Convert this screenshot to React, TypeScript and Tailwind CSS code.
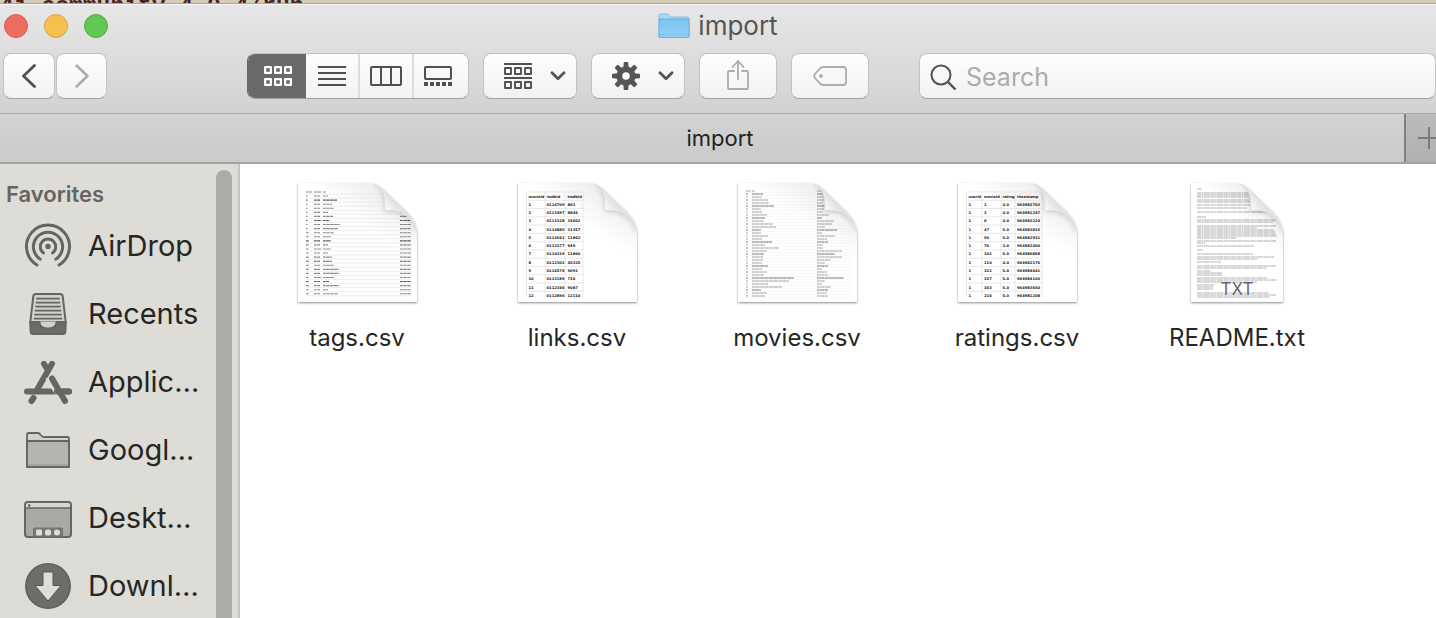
import type { ReactNode } from "react";

const LINKS_ROWS = [
  ["movieId", "imdbId", "tmdbId"],
  ["1", "0114709", "862"],
  ["2", "0113497", "8844"],
  ["3", "0113228", "15602"],
  ["4", "0114885", "31357"],
  ["5", "0113041", "11862"],
  ["6", "0113277", "949"],
  ["7", "0114319", "11860"],
  ["8", "0112302", "45325"],
  ["9", "0114576", "9091"],
  ["10", "0113189", "710"],
  ["11", "0112346", "9087"],
  ["12", "0112896", "12110"],
];

const RATINGS_ROWS = [
  ["userId", "movieId", "rating", "timestamp"],
  ["1", "1", "4.0", "964982703"],
  ["1", "3", "4.0", "964981247"],
  ["1", "6", "4.0", "964982224"],
  ["1", "47", "5.0", "964983815"],
  ["1", "50", "5.0", "964982931"],
  ["1", "70", "3.0", "964982400"],
  ["1", "101", "5.0", "964980868"],
  ["1", "110", "4.0", "964982176"],
  ["1", "151", "5.0", "964984041"],
  ["1", "157", "5.0", "964984100"],
  ["1", "163", "5.0", "964983650"],
  ["1", "216", "5.0", "964981208"],
];

const TAG_WIDTHS = [3, 5, 14, 9, 11, 5, 10, 6, 17, 15, 11, 8, 8, 5, 8, 5, 9, 9, 11, 16, 16, 11, 6, 16, 5, 15];
const MOVIE_WIDTHS = [3, 11, 10, 16, 17, 22, 9, 10, 15, 13, 12, 21, 24, 9, 9, 16, 10, 20, 13, 27, 15, 12, 11, 11, 10, 16, 10, 15, 12, 42, 37, 16, 30, 9, 15, 13];
const GENRE_WIDTHS = [5, 8, 10, 12, 6, 10, 7, 6, 12, 5, 17, 15, 8, 20, 5, 18, 10, 11, 6, 6, 25, 18, 25, 14, 8, 11, 5, 10, 11, 27, 8, 5, 14, 11, 10, 11];

/* Each entry is [y, width] of one line of body text. */
const README_LINES: [number, number][] = [
  [6, 5], [10, 80], [12, 76], [14, 74], [17, 78], [19, 60], [22, 77], [25, 50], [29, 77], [34, 9],
  [37, 79], [39, 76], [43, 79], [45, 60], [47, 77], [49, 78], [51, 79], [53, 80], [55, 40],
  [58, 79], [60, 8], [63, 57], [67, 6], [71, 56], [74, 77], [76, 61], [79, 24],
  [83, 79], [85, 69], [88, 14], [90, 25], [92, 25], [95, 70], [97, 79], [99, 60],
  [102, 17], [104, 16], [106, 16], [110, 72], [112, 79], [114, 73],
];

function Page({ id, width = 119, children }: { id: string; width?: number; children: ReactNode }) {
  const w = width;
  const outline = `M0 0H${w - 51}C${w - 43} 0 ${w - 38} 2 ${w - 34} 6L${w - 11} 28C${w - 4} 35 ${w} 42 ${w} 52V119H0Z`;
  const curl = `M${w - 44} 0.5C${w - 40} 1 ${w - 37} 3 ${w - 34} 6L${w - 11} 28C${w - 5} 34 ${w} 41 ${w} 50C${w - 6} 33 ${w - 16} 26 ${w - 32} 27.5C${w - 32} 14 ${w - 34} 4 ${w - 44} 0.5Z`;
  return (
    <svg width={w + 8} height="128" viewBox={`-4 -4 ${w + 8} 128`} aria-hidden="true">
      <defs>
        <linearGradient id={`${id}-sheet`} x1="0.2" y1="0.9" x2="0.85" y2="0">
          <stop offset="0" stopColor="#fff" />
          <stop offset="0.6" stopColor="#fff" />
          <stop offset="0.85" stopColor="#f0f0f0" />
          <stop offset="1" stopColor="#dedede" />
        </linearGradient>
        <linearGradient id={`${id}-curl`} x1="0.2" y1="0.7" x2="0.5" y2="0.4">
          <stop offset="0" stopColor="#fff" />
          <stop offset="0.4" stopColor="#fdfdfd" />
          <stop offset="1" stopColor="#e2e2e2" />
        </linearGradient>
        <filter id={`${id}-shadow`} x="-10%" y="-10%" width="120%" height="120%">
          <feDropShadow dx="0" dy="1" stdDeviation="1.2" floodColor="#000" floodOpacity="0.45" />
        </filter>
        <filter id={`${id}-soft`} x="-30%" y="-30%" width="160%" height="160%">
          <feDropShadow dx="-0.3" dy="1.5" stdDeviation="2" floodColor="#000" floodOpacity="0.18" />
        </filter>
        <clipPath id={`${id}-clip`}>
          <path d={outline} />
        </clipPath>
      </defs>
      <path d={outline} fill="#fff" filter={`url(#${id}-shadow)`} />
      <path d={outline} fill={`url(#${id}-sheet)`} />
      <g clipPath={`url(#${id}-clip)`}>
        {children}
        <path d={curl} fill={`url(#${id}-curl)`} filter={`url(#${id}-soft)`} />
        <path d={curl} fill="none" stroke="#d2d2d2" strokeWidth="0.5" />
      </g>
    </svg>
  );
}

function GridThumb({ id, rows, columns, edges }: { id: string; rows: string[][]; columns: number[]; edges: number[] }) {
  const left = edges[0];
  const right = edges[edges.length - 1];
  return (
    <Page id={id}>
      <g stroke="#e2e2e2" strokeWidth="0.8">
        {rows.map((_, i) => (
          <path key={i} d={`M${left} ${9 + i * 8.27}H${right}`} />
        ))}
        {edges.map((x) => (
          <path key={x} d={`M${x} 9V114`} />
        ))}
      </g>
      <g className="font-['DejaVu_Sans']" fontSize="3.7" fontWeight="700" fill="#222">
        {rows.map((row, i) =>
          row.map((cell, j) => (
            <text key={j} x={columns[j]} y={14.6 + i * 8.27} fontSize={i === 0 ? 3.5 : 3.7}>
              {cell}
            </text>
          )),
        )}
      </g>
    </Page>
  );
}

function TagsThumb() {
  return (
    <Page id="tags">
      {TAG_WIDTHS.map((w, i) => {
        const y = 9 + i * 4.07;
        return (
          <g key={i}>
            <path d={`M8 ${y + 2}H114`} stroke="#e2e2e2" strokeWidth="0.6" />
            <g stroke="#444" strokeWidth="1.1" strokeDasharray="2.3 0.3 1.1 0.2" opacity={i % 5 === 2 ? 0.9 : 0.65}>
              <path d={`M8 ${y}h${i === 0 ? 6 : i > 9 ? 3 : 1.5}`} />
              <path d={`M16 ${y}h${i % 7 === 0 ? 7.5 : 6}`} />
              <path d={`M25 ${y}h${w}`} />
              {i > 2 && <path d={`M102 ${y}h11`} />}
            </g>
          </g>
        );
      })}
    </Page>
  );
}

function MoviesThumb() {
  return (
    <Page id="movies">
      {MOVIE_WIDTHS.map((w, i) => {
        const y = 8 + i * 3;
        return (
          <g key={i}>
            <path d={`M8 ${y + 1.6}H114`} stroke="#eaeaea" strokeWidth="0.4" />
            <g stroke="#333" strokeWidth="0.8" strokeDasharray="2.7 0.3 1.3 0.2" opacity={i % 4 === 1 ? 0.9 : 0.6}>
              <path d={`M8 ${y}h${i === 0 ? 5 : 1.8}`} />
              <path d={`M14 ${y}h${w}`} />
              <path d={`M79 ${y}h${GENRE_WIDTHS[i]}`} />
            </g>
          </g>
        );
      })}
    </Page>
  );
}

function ReadmeThumb() {
  return (
    <Page id="readme" width={92}>
      <g stroke="#555" strokeWidth="0.7" strokeDasharray="4.1 0.4 1.7 0.4 6.3 0.5" opacity="0.65">
        {README_LINES.map(([y, w]) => (
          <path key={y} d={`M6 ${y}h${w}`} />
        ))}
      </g>
      <text x="46" y="112" textAnchor="middle" fontSize="17" fill="#666" stroke="#fff" strokeWidth="0.6" paintOrder="stroke" className="font-['Inter']">
        TXT
      </text>
    </Page>
  );
}

const FILES: { name: string; thumb: ReactNode }[] = [
  { name: "tags.csv", thumb: <TagsThumb /> },
  { name: "links.csv", thumb: <GridThumb id="links" rows={LINKS_ROWS} columns={[10.5, 28.5, 49.5]} edges={[8.5, 27, 47, 65]} /> },
  { name: "movies.csv", thumb: <MoviesThumb /> },
  { name: "ratings.csv", thumb: <GridThumb id="ratings" rows={RATINGS_ROWS} columns={[10.5, 26, 44.5, 59]} edges={[8.5, 24, 43, 57, 84]} /> },
  { name: "README.txt", thumb: <ReadmeThumb /> },
];

function AirDropIcon() {
  return (
    <svg width="48" height="48" viewBox="0 0 48 48" fill="none" stroke="#666560" strokeWidth="3" strokeLinecap="round" aria-hidden="true">
      <circle cx="24" cy="24.5" r="2.7" fill="#666560" stroke="none" />
      <path d="M19.6 31a7.7 7.7 0 1 1 8.8 0" />
      <path d="M16.3 37.2a14.6 14.6 0 1 1 15.4 0" />
      <path d="M13 43a21.5 21.5 0 1 1 22 0" />
    </svg>
  );
}

function RecentsIcon() {
  return (
    <svg width="48" height="48" viewBox="0 0 48 48" fill="none" stroke="#666560" strokeWidth="2" strokeLinejoin="round" aria-hidden="true">
      <path d="M6.300 32L9.300 6.200Q9.600 4 11.800 4H36.200Q38.400 4 38.700 6.200L41.700 32Z" fill="#d2d1cc" />
      <path d="M12.300 8.700h23.400M11.800 12.700h24.400M11.300 16.700h25.400M10.800 20.700h26.400M10.300 24.700h27.400M9.800 28.700h28.400" strokeWidth="1.700" />
      <path d="M16 31.500h16c0 8-16 8-16 0Z" fill="#d2d1cc" stroke="none" />
      <path d="M6.200 32.500H15.500c0 8 17 8 17 0H41.800L41.300 42q-0.200 2-2.200 2H8.900q-2 0-2.200-2Z" fill="#6c6b65" />
    </svg>
  );
}

function ApplicationsIcon() {
  return (
    <svg width="48" height="48" viewBox="0 0 48 48" fill="none" stroke="#666560" strokeWidth="6" strokeLinecap="round" aria-hidden="true">
      <path d="M28 5.800L13.500 31M20 5.800L24 12.500" />
      <path d="M3 33.500h42" />
      <path d="M7.500 43L9.500 40" />
      <path d="M25.200 18.500L40.500 43" stroke="#dddcd7" strokeWidth="9" strokeLinecap="butt" />
      <path d="M33 33.500H45" />
      <path d="M28 20.500L41 43" />
    </svg>
  );
}

function FolderIcon() {
  return (
    <svg width="48" height="48" viewBox="0 0 48 48" stroke="#666560" strokeWidth="1.800" strokeLinejoin="round" aria-hidden="true">
      <path d="M3 41V8.500q0-1.500 1.500-1.500H14c2.500 0 3 4 5.500 4H43.500q1.500 0 1.500 1.500V41Z" fill="#d2d1cc" />
      <path d="M3 17.500q0-2.500 2-2.500H43q2 0 2 2.500V41H3Z" fill="#b5b4af" />
      <path d="M4 39h40" stroke="#98978f" strokeWidth="1" />
    </svg>
  );
}

function DesktopIcon() {
  return (
    <svg width="48" height="48" viewBox="0 0 48 48" aria-hidden="true">
      <rect x="1" y="8" width="46" height="35" rx="3" fill="#a9a8a3" stroke="#666560" strokeWidth="2" />
      <path d="M2 14V11q0-2 2-2H44q2 0 2 2v3Z" fill="#d8d7d2" />
      <path d="M2 14h44" stroke="#666560" strokeWidth="1.500" />
      <circle cx="5.200" cy="11.500" r="1.200" fill="#55544f" />
      <path d="M9 42.500V35q0-1.500 1.500-1.500H37.500q1.500 0 1.500 1.500v7.500Z" fill="#77766f" />
      <rect x="12" y="35.500" width="6" height="6" rx="1" fill="#deddd9" />
      <rect x="21" y="35.500" width="6" height="6" rx="2" fill="#deddd9" />
      <circle cx="33" cy="38.500" r="3" fill="#deddd9" />
    </svg>
  );
}

function DownloadsIcon() {
  return (
    <svg width="48" height="48" viewBox="0 0 48 48" aria-hidden="true">
      <circle cx="24" cy="24" r="22.200" fill="#6e6d67" stroke="#5f5e58" strokeWidth="1.500" />
      <path d="M19 10h10v13.500h8L24 39 11 23.500h8Z" fill="#deddd8" stroke="#595852" strokeWidth="1" strokeLinejoin="round" />
    </svg>
  );
}

const FAVORITES: { label: string; icon: ReactNode }[] = [
  { label: "AirDrop", icon: <AirDropIcon /> },
  { label: "Recents", icon: <RecentsIcon /> },
  { label: "Applic…", icon: <ApplicationsIcon /> },
  { label: "Googl…", icon: <FolderIcon /> },
  { label: "Deskt…", icon: <DesktopIcon /> },
  { label: "Downl…", icon: <DownloadsIcon /> },
];

function Chevron() {
  return (
    <svg width="16" height="10" viewBox="0 0 16 10" fill="none" stroke="#555" strokeWidth="2.800" strokeLinecap="round" strokeLinejoin="round" aria-hidden="true">
      <path d="M2 1.800l6 6 6-6" />
    </svg>
  );
}

function GearIcon() {
  return (
    <svg width="28" height="28" viewBox="-14 -14 28 28" aria-hidden="true">
      <g fill="#555">
        {[0, 45, 90, 135, 180, 225, 270, 315].map((angle) => (
          <path key={angle} d="M-2.700 -8L-2.300 -13.300Q-2.200 -14 -1.500 -14H1.500Q2.200 -14 2.300 -13.300L2.700 -8Z" transform={`rotate(${angle})`} />
        ))}
      </g>
      <circle r="6.700" fill="none" stroke="#555" strokeWidth="5.800" />
    </svg>
  );
}

const BUTTON =
  "flex h-[46px] shrink-0 items-center justify-center rounded-[8px] border border-[#c3c3c3] border-b-[#a2a2a2] bg-linear-to-b from-[#fdfdfd] to-[#f2f2f2]";
const SEGMENT = "flex items-center justify-center";

export default function App() {
  return (
    <div className="flex h-screen flex-col overflow-hidden bg-white font-['Inter','Liberation_Sans',sans-serif] text-[#222]">
      <div className="h-[3px] shrink-0 overflow-hidden bg-[#d2ccb8]">
        <div className="-mt-[5px] font-['Liberation_Mono',monospace] text-[23px] leading-6 font-bold whitespace-nowrap text-[#4a2424]">
          4j-community-4.0.4/run
        </div>
      </div>

      <header className="shrink-0 border-t border-b border-t-[#aaa695] border-b-[#a9a9a9] bg-linear-to-b from-[#e7e7e7] to-[#d2d2d2] pb-[14px] shadow-[inset_0_1px_0_#f8f8f8]">
        <div className="mb-[5px] grid h-11 grid-cols-[1fr_auto_1fr] items-center pl-1">
          <div className="flex gap-4">
            <button aria-label="Close" className="size-6 rounded-full border border-[#db5a50] bg-[#ee6b60]" />
            <button aria-label="Minimize" className="size-6 rounded-full border border-[#dca243] bg-[#f5c04f]" />
            <button aria-label="Zoom" className="size-6 rounded-full border border-[#52ab41] bg-[#62c755]" />
          </div>
          <h1 className="flex items-center gap-2 pr-1 text-[26px] leading-8 text-[#555]">
            <svg width="32" height="26" viewBox="0 0 32 26" aria-hidden="true">
              <defs>
                <linearGradient id="folder-front" x1="0" y1="0" x2="0" y2="1">
                  <stop offset="0" stopColor="#7cc4f0" />
                  <stop offset="1" stopColor="#8fd0f7" />
                </linearGradient>
              </defs>
              <path d="M1 24V2.500Q1 1 2.500 1H9c2 0 2.500 3 4.500 3H29.500Q31 4 31 5.500V24Z" fill="#a3d8f6" stroke="#78b3d6" strokeWidth="0.800" />
              <path d="M1 6h30v17.500q0 1-1 1H2q-1 0-1-1Z" fill="url(#folder-front)" stroke="#66a9d0" strokeWidth="0.800" />
              <path d="M1.500 22h29" stroke="#6db1d9" strokeWidth="0.600" />
            </svg>
            import
          </h1>
          <div />
        </div>

        <div className="flex items-center pl-[3px]">
          <div className="flex gap-px">
            <button aria-label="Back" className={`${BUTTON} w-[52px]`}>
              <svg width="16" height="26" viewBox="0 0 16 26" fill="none" stroke="#505050" strokeWidth="2.800" strokeLinecap="round" strokeLinejoin="round" aria-hidden="true">
                <path d="M13.500 2.500L2.500 13l11 10.500" />
              </svg>
            </button>
            <button aria-label="Forward" className={`${BUTTON} w-[51px]`}>
              <svg width="16" height="26" viewBox="0 0 16 26" fill="none" stroke="#acacac" strokeWidth="2.500" strokeLinecap="round" strokeLinejoin="round" aria-hidden="true">
                <path d="M2.500 2.500l11 10.500-11 10.500" />
              </svg>
            </button>
          </div>

          <div role="group" aria-label="View" className="ml-[140px] flex h-[46px] shrink-0 overflow-hidden rounded-[8px] border border-[#c3c3c3] border-b-[#a2a2a2] border-l-[#666] bg-linear-to-b from-[#fdfdfd] to-[#f2f2f2]">
            <button aria-label="Icons" aria-pressed="true" className={`${SEGMENT} w-[58px] bg-[#6a6a6a] pl-[2px]`}>
              <svg width="28" height="20" viewBox="0 0 28 20" fill="none" stroke="#fff" strokeWidth="2.200" strokeLinejoin="round" aria-hidden="true">
                <path d="M1.100 1.100h5.800v5.800H1.100ZM11.100 1.100h5.800v5.800h-5.800ZM21.100 1.100h5.800v5.800h-5.800ZM1.100 13.100h5.800v5.800H1.100ZM11.100 13.100h5.800v5.800h-5.800ZM21.100 13.100h5.800v5.800h-5.800Z" />
              </svg>
            </button>
            <button aria-label="List" className={`${SEGMENT} w-[52px]`}>
              <svg width="28" height="20" viewBox="0 0 28 20" fill="none" stroke="#505050" strokeWidth="2" aria-hidden="true">
                <path d="M0 1h28M0 7h28M0 13h28M0 19h28" />
              </svg>
            </button>
            <button aria-label="Columns" className={`${SEGMENT} w-[54px] border-l-2 border-[#dcdcdc]`}>
              <svg width="32" height="20" viewBox="0 0 32 20" fill="none" stroke="#505050" strokeWidth="2" aria-hidden="true">
                <rect x="1" y="1" width="30" height="18" rx="1" />
                <path d="M11 1v18M21 1v18" />
              </svg>
            </button>
            <button aria-label="Gallery" className={`${SEGMENT} w-[56px] border-l-2 border-[#dcdcdc] pr-[6px]`}>
              <svg width="28" height="20" viewBox="0 0 28 20" fill="none" stroke="#505050" strokeWidth="2" aria-hidden="true">
                <rect x="1" y="1" width="26" height="12" rx="1" />
                <path d="M0 18h4M6 18h4M12 18h4M18 18h4M24 18h4" strokeWidth="4" />
              </svg>
            </button>
          </div>

          <div className="ml-[14px] flex gap-[14px]">
            <button aria-label="Group" className={`${BUTTON} w-[94px] gap-[18px] pl-[10px]`}>
              <svg width="28" height="26" viewBox="0 0 28 26" fill="none" stroke="#505050" strokeWidth="1.900" strokeLinejoin="round" aria-hidden="true">
                <path d="M0 1h28M0 15h28" />
                <path d="M1 5h6v6H1ZM11 5h6v6h-6ZM21 5h6v6h-6ZM1 19h6v6H1ZM11 19h6v6h-6ZM21 19h6v6h-6Z" />
              </svg>
              <Chevron />
            </button>
            <button aria-label="Action" className={`${BUTTON} w-[94px] gap-[18px] pl-[10px]`}>
              <GearIcon />
              <Chevron />
            </button>
            <button aria-label="Share" className={`${BUTTON} w-[78px]`}>
              <svg width="24" height="32" viewBox="0 0 24 32" fill="none" stroke="#acacac" strokeWidth="1.800" strokeLinecap="round" strokeLinejoin="round" className="mb-[2px]" aria-hidden="true">
                <path d="M8 12H3q-1 0-1 1V29q0 1 1 1H21q1 0 1-1V13q0-1-1-1H16" />
                <path d="M12 20V2M6.500 8L12 2l5.500 6" />
              </svg>
            </button>
            <button aria-label="Tags" className={`${BUTTON} w-[78px]`}>
              <svg width="34" height="20" viewBox="0 0 34 20" fill="none" stroke="#acacac" strokeWidth="1.800" strokeLinejoin="round" aria-hidden="true">
                <path d="M10.500 1H30q3 0 3 3V16q0 3-3 3H10.500Q8.500 19 7 17.500L2 12Q0.500 10 2 8L7 2.500Q8.500 1 10.500 1Z" />
                <circle cx="8" cy="10" r="1.900" fill="#acacac" stroke="none" />
              </svg>
            </button>
          </div>

          <label className="ml-[50px] flex h-[46px] min-w-0 flex-1 items-center gap-2 rounded-[8px] border border-[#c3c3c3] border-b-[#a2a2a2] bg-linear-to-b from-[#fdfdfd] to-[#f2f2f2] pt-px pl-[10px]">
            <svg width="28" height="28" viewBox="0 0 28 28" fill="none" stroke="#505050" strokeWidth="2" className="shrink-0" aria-hidden="true">
              <circle cx="11" cy="12" r="9.500" />
              <path d="M18 19l7.500 7.500" strokeWidth="2.400" />
            </svg>
            <input type="text" aria-label="Search" placeholder="Search" className="min-w-0 flex-1 bg-transparent text-[25px] leading-8 outline-none placeholder:text-[#acacac]" />
          </label>
        </div>
      </header>

      <div className="flex h-[50px] shrink-0 border-b-2 border-[#a4a4a4] bg-linear-to-b from-[#d3d3d3] to-[#cacaca]">
        <button className="flex flex-1 items-center justify-center pl-9 text-[22px] leading-7 text-[#222]">import</button>
        <button aria-label="New tab" className="flex w-8 items-center overflow-hidden border-l-2 border-[#808080] bg-linear-to-b from-[#bbb] to-[#b1b1b1] pl-3">
          <svg width="22" height="22" viewBox="0 0 22 22" stroke="#7b7b7b" strokeWidth="2" className="shrink-0" aria-hidden="true">
            <path d="M0 11h22M11 0v22" />
          </svg>
        </button>
      </div>

      <div className="flex min-h-0 flex-1">
        <aside className="flex w-[240px] shrink-0 overflow-hidden border-r-2 border-[#c5c4c0] bg-[#dddcd7]">
          <nav aria-label="Favorites" className="min-w-0 flex-1 pt-4">
            <h2 className="pl-[6px] text-[22px] leading-7 font-semibold text-[#65645f]">Favorites</h2>
            <ul className="pt-1">
              {FAVORITES.map((item) => (
                <li key={item.label}>
                  <a href="#" className="flex h-[68px] items-center gap-4 pl-6 text-[29px] leading-9 whitespace-nowrap text-[#262622]">
                    <span className="shrink-0">{item.icon}</span>
                    {item.label}
                  </a>
                </li>
              ))}
            </ul>
          </nav>
          <div className="mt-[6px] mr-[6px] w-4 shrink-0 rounded-t-full bg-[#acaba7]" />
        </aside>

        <main className="flex flex-1 flex-wrap content-start pt-[15px] pl-[7px]">
          {FILES.map((file) => (
            <figure key={file.name} className="flex w-[220px] flex-col items-center gap-[17px]">
              {file.thumb}
              <figcaption className="text-[24px] leading-7 text-[#262626]">{file.name}</figcaption>
            </figure>
          ))}
        </main>
      </div>
    </div>
  );
}
